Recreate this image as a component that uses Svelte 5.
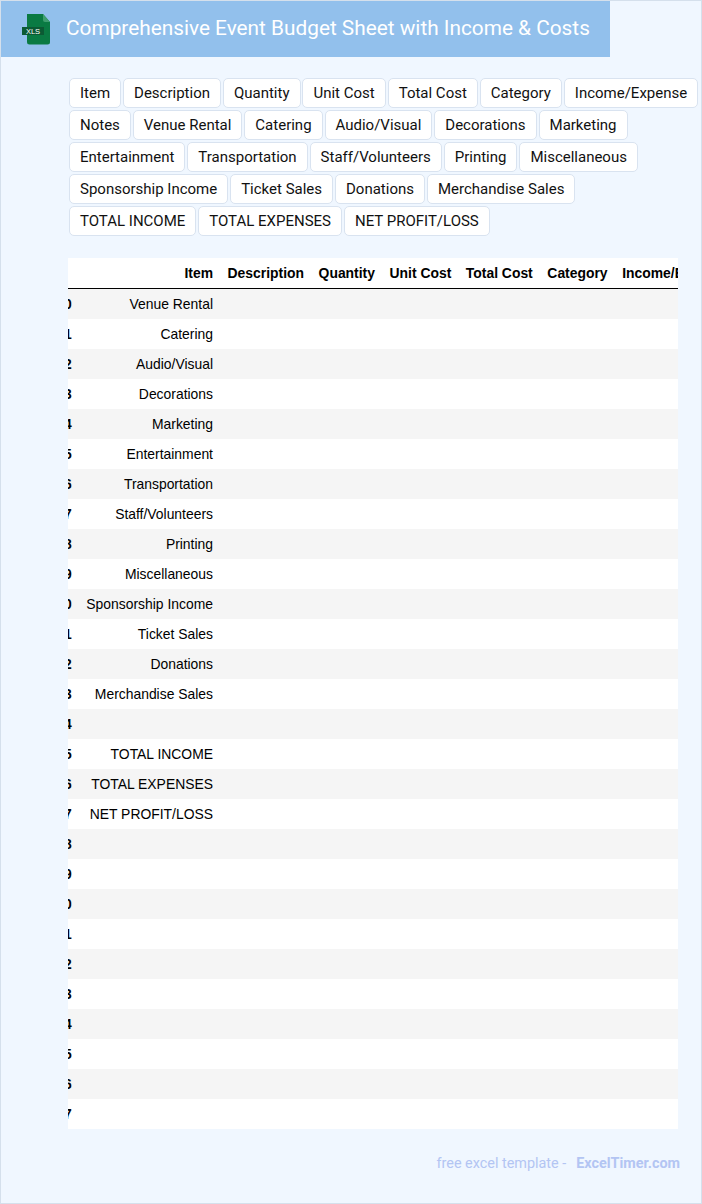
<script>
	const tags = [
		"Item", "Description", "Quantity", "Unit Cost", "Total Cost", "Category", "Income/Expense",
		"Notes", "Venue Rental", "Catering", "Audio/Visual", "Decorations", "Marketing",
		"Entertainment", "Transportation", "Staff/Volunteers", "Printing", "Miscellaneous",
		"Sponsorship Income", "Ticket Sales", "Donations", "Merchandise Sales",
		"TOTAL INCOME", "TOTAL EXPENSES", "NET PROFIT/LOSS"
	];
	const columns = tags.slice(0, 8);
	const items = [
		"Venue Rental", "Catering", "Audio/Visual", "Decorations", "Marketing", "Entertainment",
		"Transportation", "Staff/Volunteers", "Printing", "Miscellaneous", "Sponsorship Income",
		"Ticket Sales", "Donations", "Merchandise Sales", "", "TOTAL INCOME", "TOTAL EXPENSES",
		"NET PROFIT/LOSS", "", "", "", "", "", "", "", "", "", ""
	];
</script>

<div class="page">
	<header>
		<svg class="icon" width="30" height="32" viewBox="0 0 30 32">
			<path d="M7 1h16l7 8v20a2.500 2.500 0 0 1-2.500 2.500h-18A2.500 2.500 0 0 1 7 29z" fill="#0a7a43" />
			<path d="M23 1l7 8h-5a2 2 0 0 1-2-2z" fill="#3f9e6f" />
			<rect x="2" y="14" width="22" height="8" fill="#0b5a34" />
			<text x="13" y="21" text-anchor="middle">XLS</text>
		</svg>
		<h1>Comprehensive Event Budget Sheet with Income &amp; Costs</h1>
	</header>

	<div class="tags">
		{#each tags as tag}
			<span class="tag">{tag}</span>
		{/each}
	</div>

	<div class="table-wrap">
		<table>
			<thead>
				<tr>
					<th class="idx"></th>
					{#each columns as col}
						<th>{col}</th>
					{/each}
				</tr>
			</thead>
			<tbody>
				{#each items as item, i}
					<tr>
						<th class="idx">{i + 10}</th>
						<td>{item}</td>
						{#each columns.slice(1) as col}
							<td></td>
						{/each}
					</tr>
				{/each}
			</tbody>
		</table>
	</div>

	<footer>
		<span>free excel template -</span>
		<strong>ExcelTimer.com</strong>
	</footer>
</div>

<style>
	:global(body) {
		background: #f0f7ff;
	}

	.page {
		background: #f0f7ff;
		border: 1px solid #d5e0ec;
		box-sizing: border-box;
		font-family: Roboto, "Liberation Sans", sans-serif;
		height: 1204px;
		overflow: hidden;
		width: 702px;
	}

	header {
		align-items: center;
		background: #92c0ec;
		box-sizing: border-box;
		display: flex;
		height: 56px;
		padding-left: 19px;
		width: 609px;
	}

	.icon {
		flex: none;
		margin-right: 16px;
	}

	.icon text {
		fill: #fff;
		font-family: "Liberation Sans", sans-serif;
		font-size: 7.500px;
	}

	h1 {
		color: #fff;
		font-size: 20.800px;
		font-weight: 400;
		line-height: 52px;
		margin: 0 0 2px;
		white-space: nowrap;
	}

	.tags {
		display: flex;
		flex-wrap: wrap;
		gap: 2px 1.950px;
		margin: 21px 0 0 68px;
	}

	.tag {
		background: #fff;
		border: 1px solid #d9e3f0;
		border-radius: 5px;
		box-sizing: border-box;
		color: #111;
		font-size: 15px;
		height: 30px;
		line-height: 28px;
		padding: 0 10px;
		white-space: nowrap;
	}

	.table-wrap {
		margin: 22px 0 0 67px;
		overflow: hidden;
		width: 610px;
	}

	table {
		background: #fff;
		border-collapse: collapse;
		color: #000;
		font-family: "Liberation Sans", Arial, sans-serif;
		font-size: 13.900px;
		margin-left: -19px;
	}

	thead th {
		border-bottom: 1px solid #000;
		height: 30px;
	}

	th,
	td {
		padding: 0 7.300px;
		text-align: right;
		white-space: nowrap;
	}

	tbody tr {
		height: 30px;
	}

	tbody tr:nth-child(odd) {
		background: #f5f5f5;
	}

	footer {
		color: #b3c5f3;
		display: flex;
		font-size: 14.400px;
		gap: 10px;
		justify-content: flex-end;
		margin-top: 26px;
		padding-right: 21px;
	}

	footer strong {
		font-weight: 700;
	}
</style>
